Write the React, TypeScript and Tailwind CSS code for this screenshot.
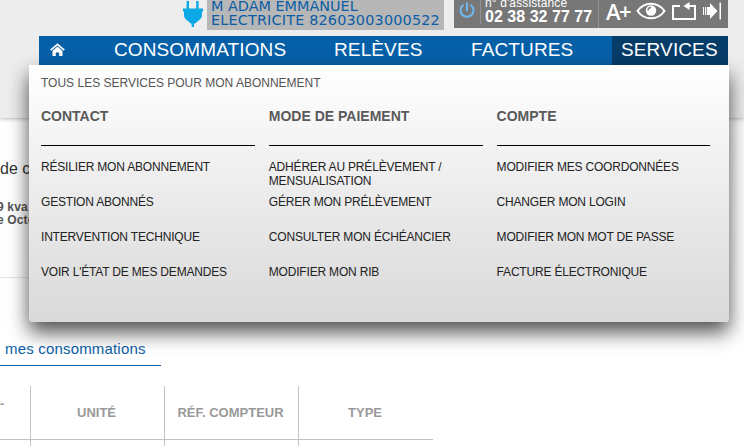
import React from "react";

const columns = [
  {
    title: "CONTACT",
    items: ["RÉSILIER MON ABONNEMENT", "GESTION ABONNÉS", "INTERVENTION TECHNIQUE", "VOIR L'ÉTAT DE MES DEMANDES"],
  },
  {
    title: "MODE DE PAIEMENT",
    items: ["ADHÉRER AU PRÉLÈVEMENT / MENSUALISATION", "GÉRER MON PRÉLÈVEMENT", "CONSULTER MON ÉCHÉANCIER", "MODIFIER MON RIB"],
  },
  {
    title: "COMPTE",
    items: ["MODIFIER MES COORDONNÉES", "CHANGER MON LOGIN", "MODIFIER MON MOT DE PASSE", "FACTURE ÉLECTRONIQUE"],
  },
];

function PlugIcon() {
  return (
    <svg className="ml-[183px] mt-px h-[26px] w-5 shrink-0" viewBox="0 0 20 26" fill="#0ba9e6">
      <path d="M3.600 0h2.400v8H3.600zM13.200 0h2.400v8h-2.400zM0 7.500h20v3h-1v4c0 3-3 4.500-5 6.500L11 23v3H8.600v-3L6 21c-2-2-5-3.500-5-6.500v-4H0z" />
    </svg>
  );
}

function PowerIcon() {
  return (
    <svg className="h-4 w-4" viewBox="0 0 16 16" fill="none" stroke="#6fb9ef" strokeWidth="2" strokeLinecap="round">
      <path d="M8 1v7.500M4 3.200A6.500 6.500 0 1 0 12 3.200" />
    </svg>
  );
}

function EyeIcon() {
  return (
    <svg className="mt-[2px] h-[18px] w-[30px] shrink-0" viewBox="0 0 30 18">
      <path d="M1.500 9C5 4 9.500 1.700 15 1.700S25 4 28.500 9C25 14 20.500 16.300 15 16.300S5 14 1.500 9z" fill="none" stroke="#fff" strokeWidth="2" />
      <circle cx="15" cy="8.500" r="5.200" fill="#fff" />
      <path d="M12 8.500a3 3 0 0 1 3-3" fill="none" stroke="#777" strokeWidth="1.300" />
    </svg>
  );
}

function ReturnIcon() {
  return (
    <svg className="ml-[5px] mt-px h-5 w-[26px] shrink-0" viewBox="0 0 26 20">
      <path d="M9 5H2v13h22V5h-6" fill="none" stroke="#fff" strokeWidth="2" />
      <path d="M12.500 5L18.500 1v8z" fill="#fff" />
    </svg>
  );
}

function SkipIcon() {
  return (
    <svg className="ml-[6px] mt-px h-5 w-5 shrink-0" viewBox="0 0 20 20" fill="#fff">
      <path d="M0 6h1v8H0zM2 6h1.200v8H2zM4 6h3V2l7.500 8L7 18v-4H4zM16.500 1.500H18v17h-1.500z" />
    </svg>
  );
}

function HomeIcon() {
  return (
    <svg className="ml-[11px] mt-[7px] h-[14px] w-[15px]" viewBox="0 0 15 14">
      <path d="M.7 7.200L7.500 1.300l6.800 5.900" fill="none" stroke="#fff" strokeWidth="1.700" />
      <path d="M2.500 7.900l5-4.300 5 4.300V13H9.200V9.500H5.800V13H2.500z" fill="#fff" />
    </svg>
  );
}

function Header() {
  return (
    <header className="h-[118px] bg-[#ededed] shadow-[0_0_5px_rgba(0,0,0,0.4)]">
      <div className="flex h-9 items-start">
        <PlugIcon />
        <div className="ml-1 h-[30px] w-[237px] overflow-hidden whitespace-nowrap bg-[#b7b7b7] pl-1 font-['DejaVu_Sans',sans-serif] text-[14.400px] leading-[14px] text-[#0b5ea6]">
          <div className="-mt-px">M ADAM EMMANUEL</div>
          <div className="tracking-[0.180px]">ELECTRICITE 82603003000522</div>
        </div>
        <div className="ml-[10px] flex h-7 w-[274px] items-start overflow-hidden bg-[#777777]">
          <div className="flex h-6 w-[27px] shrink-0 items-start border-r border-[#929292] pl-[5px] pt-[2px]">
            <PowerIcon />
          </div>
          <div className="h-7 w-[118px] shrink-0 border-r border-[#929292] pl-1 text-white">
            <div className="-mt-[3px] text-[12px] leading-[13px] tracking-[0.120px]">n° d'assistance</div>
            <div className="text-[16px] font-bold leading-[14px] tracking-[0.030px]">02 38 32 77 77</div>
          </div>
          <div className="ml-[7px] flex w-[30px] shrink-0 font-['Open_Sans',sans-serif] text-[22px] font-semibold leading-[22px] text-white">
            <span className="w-[13px]">A</span>
            <span className="-mt-px">+</span>
          </div>
          <EyeIcon />
          <ReturnIcon />
          <SkipIcon />
        </div>
      </div>
      <nav className="ml-[39px] flex h-[29px] w-[689px] bg-[#0660a8] text-[19px] leading-[27px] tracking-[0.120px] text-white">
        <HomeIcon />
        <span className="ml-[49px] w-[220px]">CONSOMMATIONS</span>
        <span className="w-[137px]">RELÈVES</span>
        <span className="w-[141px]">FACTURES</span>
        <span className="w-[116px] bg-[#063c68] pl-[9px]">SERVICES</span>
      </nav>
    </header>
  );
}

function ServicesMenu() {
  return (
    <section className="absolute left-[29px] top-[65px] h-[257px] w-[700px] rounded-b-[4px] bg-linear-to-b from-white to-[#d9d9d9] pl-3 pt-[11px] shadow-[0_10px_20px_rgba(0,0,0,0.7)]">
      <p className="text-[12px] leading-[14px] text-[#555]">TOUS LES SERVICES POUR MON ABONNEMENT</p>
      <div className="mt-[18px] flex gap-[14px]">
        {columns.map((column) => (
          <div key={column.title} className="w-[213.800px]">
            <h2 className="h-[38px] border-b border-black text-[14px] font-bold leading-4 text-[#5a5a5a]">{column.title}</h2>
            <ul className="mt-[14px] text-[12px] leading-[14px] tracking-[-0.190px] text-[#222]">
              {column.items.map((item) => (
                <li key={item} className="h-[35px] w-[200px]">{item}</li>
              ))}
            </ul>
          </div>
        ))}
      </div>
    </section>
  );
}

export default function App() {
  return (
    <div className="relative h-[446px] w-[744px] overflow-hidden bg-white font-['Liberation_Sans',Arial,sans-serif]">
      <Header />
      <main>
        <div className="h-[160px] w-10 overflow-hidden whitespace-nowrap border-b border-[#e5e5e5] pt-[42px]">
          <p className="text-[16px] leading-[18px] text-[#333]">de c</p>
          <div className="-ml-[3px] mt-[23px] text-[12px] font-bold leading-[13px] tracking-[0.150px] text-[#555]">
            <p>9 kva</p>
            <p>e Octo</p>
          </div>
        </div>
        <h3 className="mt-[62px] h-[26px] w-[161px] border-b border-[#0b5ea6] pl-[5px] text-[15px] leading-[18px] tracking-[0.180px] text-[#0b5ea6]">mes consommations</h3>
        <div className="mt-5 grid h-[54px] w-[433px] grid-cols-[31px_134px_134px_134px] border-b border-[#c2c2c2] text-center text-[13px] font-bold leading-[53px] text-[#999]">
          <span className="border-r border-[#c2c2c2] text-left leading-9">-</span>
          <span className="border-r border-[#c2c2c2] pr-[2px]">UNITÉ</span>
          <span className="border-r border-[#c2c2c2] pr-[2px]">RÉF. COMPTEUR</span>
          <span className="pr-[2px]">TYPE</span>
        </div>
        <div className="grid h-[6px] w-[433px] grid-cols-[31px_134px_134px_134px]">
          <span className="border-r border-[#c2c2c2]" />
          <span className="border-r border-[#c2c2c2]" />
          <span className="border-r border-[#c2c2c2]" />
        </div>
      </main>
      <ServicesMenu />
    </div>
  );
}
